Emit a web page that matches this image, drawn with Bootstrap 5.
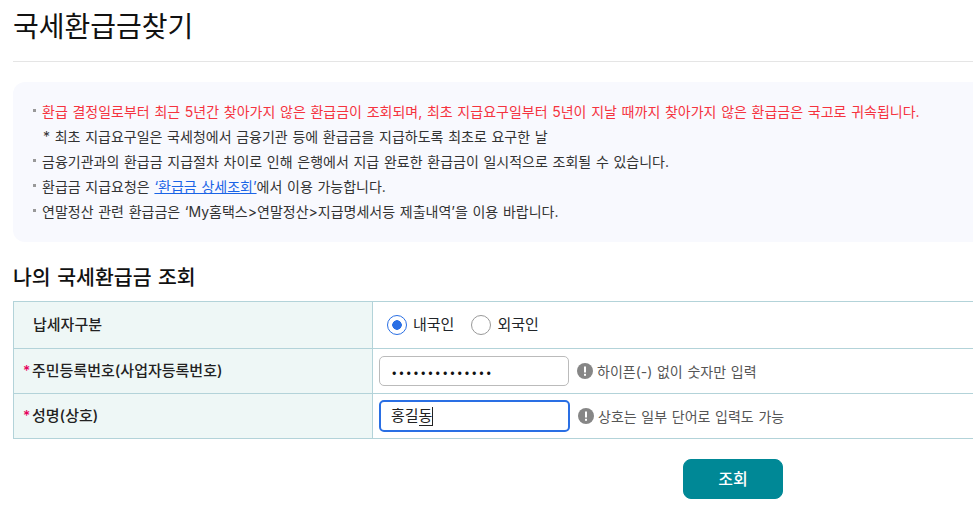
<!DOCTYPE html>
<html lang="ko">
<head>
<meta charset="utf-8">
<title>국세환급금찾기</title>
<link href="https://cdn.jsdelivr.net/npm/bootstrap@5.3.0/dist/css/bootstrap.min.css" rel="stylesheet">
<style>
html,body{overflow:hidden;height:524px;background:#fff}
body{font-family:Inter,"Noto Sans CJK KR","Noto Sans",sans-serif;color:#222;font-size:14px;word-spacing:.75px}
.page-wrap{width:1440px;margin-left:13px}
.page-title{font-size:28px;font-weight:400;line-height:40px;margin:0;padding-top:7px;height:54px;color:#111;border-bottom:1px solid #e5e5e5;box-sizing:content-box}
.info-box{margin-top:20px;height:160px;background:#f8f9fe;border-radius:12px;padding:17px 20px}
.info-list{list-style:none;margin:0;padding:0}
.info-list li{line-height:25px;padding-left:9px;position:relative;color:#333}
.info-list li.dot::before{content:"";position:absolute;left:0;top:10px;width:3px;height:3px;background:#999}
.info-list li.red{color:#f5333f}
.info-list li.note{padding-left:10px}
.info-list a{color:#1a64e6}
.sec-title{font-size:20.5px;font-weight:500;line-height:28px;margin:22px 0 9px;color:#111;word-spacing:1px}
.tax-table{width:100%;border-collapse:collapse;margin:0;table-layout:fixed}
.tax-table th,.tax-table td{border:1px solid #b3d3d9;padding:0;vertical-align:middle}
.tax-table th{width:359px;background:#eef7f6;font-weight:500;font-size:15px;color:#222;padding-left:19px;position:relative}
.tax-table th.has-req{padding-left:18px}
.tax-table td{padding-left:6px}
.row-a{height:47px}.row-b,.row-c{height:45px}
.req{position:absolute;left:9px;top:50%;margin-top:-9px;color:#e6005c;font-size:14px;line-height:18px}
.radio-row{padding-left:8px;display:flex;align-items:center;gap:17px;font-size:15px}
.form-check-input.rad{width:20px;height:20px;margin:0 6px 0 0;border-color:#999;float:none;flex:none}
.form-check-input.rad:checked{background-color:#fff;border-color:#2a6fe4;background-image:radial-gradient(circle,#2a6fe4 0 4.5px,transparent 5px)}
.rad-item{display:flex;align-items:center}
.field{width:190px;height:30px;border:1px solid #bbb;border-radius:5px;padding:0 12px;font-family:"Noto Sans CJK KR",sans-serif;font-size:13px;letter-spacing:2.85px;color:#111;flex:none;box-shadow:none}
.field:focus{border-color:#bbb;box-shadow:none}
.field-focus{width:191px;height:32px;border:2px solid #2a6fe4;border-radius:5px;padding:0 10px;line-height:28px;font-size:15px;color:#222;flex:none}
.comp{border-bottom:1px solid #222;border-right:1px solid #222;display:inline-block;line-height:18px}
.hint{color:#555;font-size:14px;margin-left:4px}
.hint-ico{margin-left:8px;flex:none}
.go-btn{width:100px;height:40px;border-radius:8px;background:#008896;border-color:#008896;color:#fff;font-weight:500;font-size:16px;padding:0}
.go-btn:hover{background:#008896;border-color:#008896;color:#fff}
.btn-line{margin-top:20px}
</style>
</head>
<body>
<div class="page-wrap">
  <h1 class="page-title">국세환급금찾기</h1>
  <div class="info-box">
    <ul class="info-list">
      <li class="dot red">환급 결정일로부터 최근 5년간 찾아가지 않은 환급금이 조회되며, 최초 지급요구일부터 5년이 지날 때까지 찾아가지 않은 환급금은 국고로 귀속됩니다.</li>
      <li class="note">* 최초 지급요구일은 국세청에서 금융기관 등에 환급금을 지급하도록 최초로 요구한 날</li>
      <li class="dot">금융기관과의 환급금 지급절차 차이로 인해 은행에서 지급 완료한 환급금이 일시적으로 조회될 수 있습니다.</li>
      <li class="dot">환급금 지급요청은 <a href="#">‘환급금 상세조회’</a>에서 이용 가능합니다.</li>
      <li class="dot">연말정산 관련 환급금은 ‘My홈택스&gt;연말정산&gt;지급명세서등 제출내역’을 이용 바랍니다.</li>
    </ul>
  </div>
  <h2 class="sec-title">나의 국세환급금 조회</h2>
  <table class="table tax-table">
    <tbody>
      <tr class="row-a">
        <th>납세자구분</th>
        <td><div class="radio-row">
          <label class="rad-item"><input class="form-check-input rad" type="radio" name="t" checked>내국인</label>
          <label class="rad-item"><input class="form-check-input rad" type="radio" name="t">외국인</label>
        </div></td>
      </tr>
      <tr class="row-b">
        <th class="text-nowrap has-req"><span class="req">*</span>주민등록번호(사업자등록번호)</th>
        <td><div class="d-flex align-items-center">
          <input class="form-control field" type="password" value="12345678901234" aria-label="주민등록번호">
          <svg class="hint-ico" width="16" height="16" viewBox="0 0 16 16"><circle cx="8" cy="8" r="8" fill="#868686"/><rect x="7" y="3.5" width="2" height="6" fill="#fff"/><rect x="7" y="10.8" width="2" height="2" fill="#fff"/></svg>
          <span class="hint">하이픈(-) 없이 숫자만 입력</span>
        </div></td>
      </tr>
      <tr class="row-c">
        <th class="has-req"><span class="req">*</span>성명(상호)</th>
        <td><div class="d-flex align-items-center">
          <div class="field-focus">홍길<span class="comp">동</span></div>
          <svg class="hint-ico" width="16" height="16" viewBox="0 0 16 16"><circle cx="8" cy="8" r="8" fill="#868686"/><rect x="7" y="3.5" width="2" height="6" fill="#fff"/><rect x="7" y="10.8" width="2" height="2" fill="#fff"/></svg>
          <span class="hint">상호는 일부 단어로 입력도 가능</span>
        </div></td>
      </tr>
    </tbody>
  </table>
  <div class="btn-line text-center"><button type="button" class="btn go-btn">조회</button></div>
</div>
<script src="https://cdn.jsdelivr.net/npm/bootstrap@5.3.0/dist/js/bootstrap.bundle.min.js"></script>
</body>
</html>
